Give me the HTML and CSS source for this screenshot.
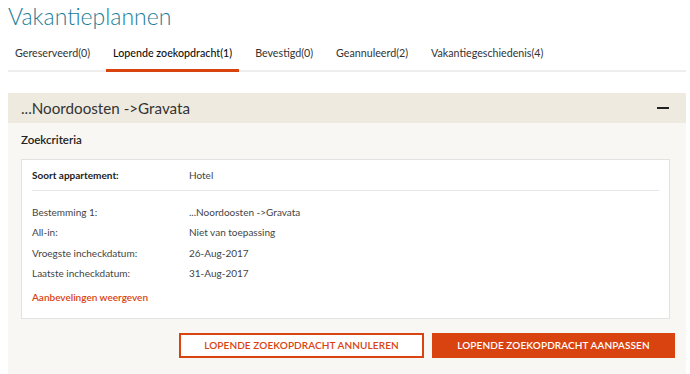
FILE: index.html
```html
<!DOCTYPE html>
<html lang="nl">
<head>
    <meta charset="UTF-8">
    <title>Vakantieplannen</title>
    <link rel="stylesheet" href="styles.css">
</head>
<body>
    <div id="page">
        <h1 class="title">Vakantieplannen</h1>
        <ul class="tabs">
            <li>Gereserveerd(0)</li>
            <li class="active">Lopende zoekopdracht(1)</li>
            <li>Bevestigd(0)</li>
            <li>Geannuleerd(2)</li>
            <li>Vakantiegeschiedenis(4)</li>
        </ul>
        <div class="panel">
            <div class="panel-head">
                <span class="panel-title">...Noordoosten -&gt;Gravata</span>
                <span class="toggle"></span>
            </div>
            <div class="panel-body">
                <div class="section-title">Zoekcriteria</div>
                <div class="criteria">
                    <div class="row main-row">
                        <span class="label">Soort appartement:</span>
                        <span class="value">Hotel</span>
                    </div>
                    <div class="rows">
                        <div class="row"><span class="label">Bestemming 1:</span><span class="value">...Noordoosten -&gt;Gravata</span></div>
                        <div class="row"><span class="label">All-in:</span><span class="value">Niet van toepassing</span></div>
                        <div class="row"><span class="label">Vroegste incheckdatum:</span><span class="value">26-Aug-2017</span></div>
                        <div class="row"><span class="label">Laatste incheckdatum:</span><span class="value">31-Aug-2017</span></div>
                    </div>
                    <a class="link" href="#">Aanbevelingen weergeven</a>
                </div>
                <div class="actions">
                    <button class="btn btn-outline">LOPENDE ZOEKOPDRACHT ANNULEREN</button>
                    <button class="btn btn-fill">LOPENDE ZOEKOPDRACHT AANPASSEN</button>
                </div>
            </div>
        </div>
    </div>
</body>
</html>
```

FILE: styles.css
```css
body {
    margin: 0;
    font-family: Lato, "Open Sans", sans-serif;
    color: #333;
    background: #fff;
}
#page {
    padding: 0 4px 0 8px;
}
.title {
    margin: 0;
    padding-top: 2px;
    font-size: 23px;
    font-weight: 300;
    line-height: 28px;
    color: #1d7d99;
}
.tabs {
    display: flex;
    list-style: none;
    margin: 12px 0 0;
    padding: 0;
    border-bottom: 2px solid #eeeeee;
}
.tabs li {
    padding: 4px 7px 9px;
    margin-right: 9px;
    font-size: 10.7px;
    line-height: 14px;
    color: #333;
    border-bottom: 3px solid transparent;
    margin-bottom: -2px;
}
.tabs li.active {
    border-bottom-color: #d9430f;
    font-weight: 500;
    color: #111;
}
.panel {
    margin-top: 21px;
}
.panel-head {
    display: flex;
    justify-content: space-between;
    align-items: center;
    height: 30px;
    padding: 0 17px 0 13px;
    background: #efeae0;
}
.panel-title {
    font-size: 15.2px;
    color: #333;
}
.toggle {
    width: 12px;
    height: 2px;
    background: #222;
}
.panel-body {
    background: #f8f7f4;
    padding: 10px 14px 18px 13px;
}
.section-title {
    font-size: 11.5px;
    font-weight: 600;
    color: #222;
    margin-bottom: 13px;
}
.criteria {
    background: #fff;
    border: 1px solid #e2e2e2;
    margin-right: 2px;
    padding: 0 10px 15px;
}
.row {
    display: flex;
    font-size: 10px;
    line-height: 20.5px;
    color: #444;
}
.label {
    width: 157px;
}
.main-row {
    padding: 5px 0 4px;
    border-bottom: 1px solid #e6e6e6;
}
.main-row .label {
    font-weight: 700;
    color: #222;
}
.rows {
    padding-top: 11px;
}
.link {
    display: block;
    margin-top: 7px;
    font-size: 10px;
    font-weight: 600;
    color: #d9430f;
    text-decoration: none;
}
.actions {
    display: flex;
    justify-content: flex-end;
    gap: 8px;
    margin-top: 14px;
    margin-right: -3px;
}
.btn {
    height: 25px;
    width: 245px;
    font-family: Lato, "Open Sans", sans-serif;
    font-size: 10px;
    font-weight: 600;
    letter-spacing: 0.1px;
    cursor: pointer;
}
.btn-outline {
    background: #fff;
    color: #d9430f;
    border: 2px solid #d9430f;
}
.btn-fill {
    background: #d9430f;
    color: #fff;
    border: none;
    width: 243px;
}
```
